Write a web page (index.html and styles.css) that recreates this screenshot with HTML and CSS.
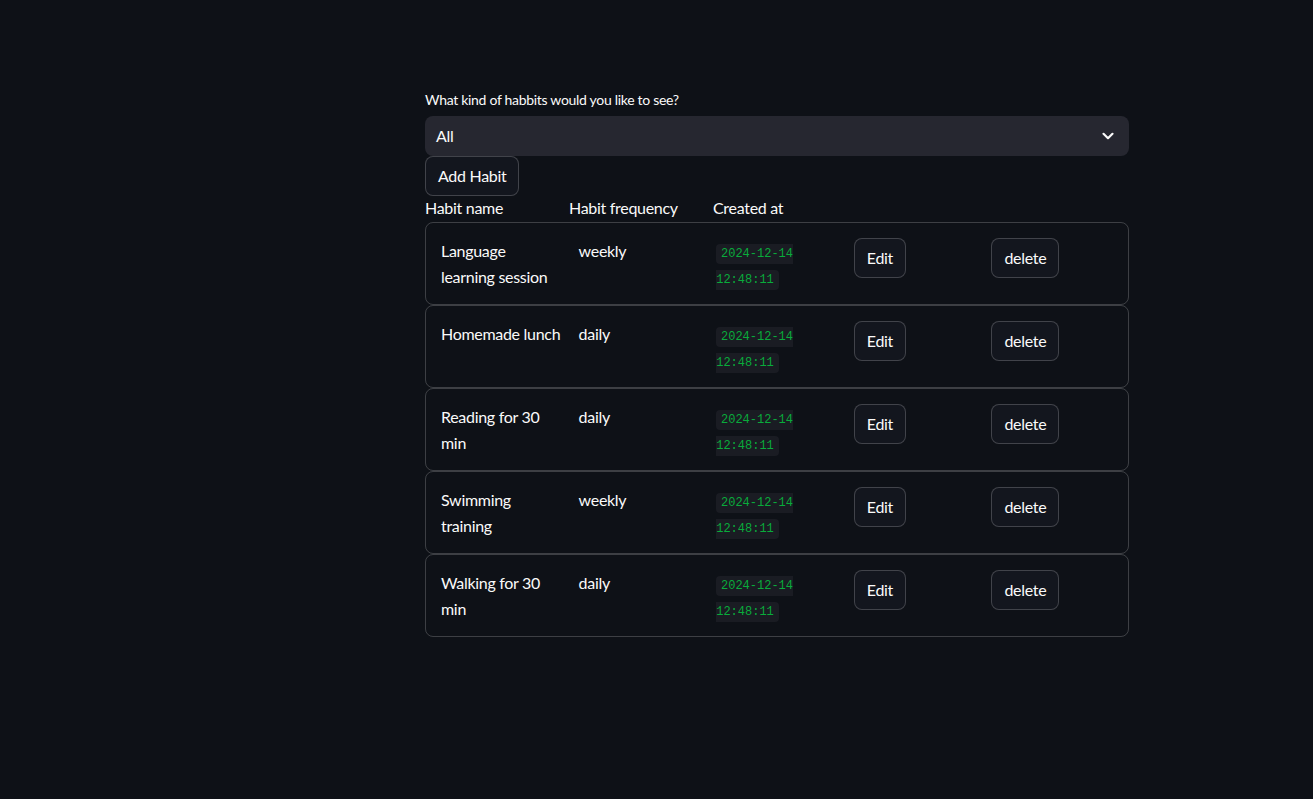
FILE: index.html
```html
<!DOCTYPE html>
<html lang="en">
<head>
<meta charset="utf-8">
<title>Habits</title>
<link rel="stylesheet" href="styles.css">
</head>
<body>
<main class="app">
  <div class="block">
    <label class="label">What kind of habbits would you like to see?</label>
    <div class="select">
      <span>All</span>
      <svg class="chev" width="14" height="14" viewBox="0 0 14 14"><path d="M2.5 4.8 L7 9.2 L11.5 4.8" fill="none" stroke="#fafafa" stroke-width="2.2" stroke-linecap="round" stroke-linejoin="round"/></svg>
    </div>
    <div class="btn-row"><button class="btn">Add Habit</button></div>
    <div class="cols head">
      <div>Habit name</div>
      <div>Habit frequency</div>
      <div>Created at</div>
      <div></div>
      <div></div>
    </div>
    <div class="card">
      <div class="cols">
        <div>Language learning session</div>
        <div>weekly</div>
        <div><code>2024-12-14 12:48:11</code></div>
        <div><button class="btn">Edit</button></div>
        <div><button class="btn">delete</button></div>
      </div>
    </div>
    <div class="card">
      <div class="cols">
        <div>Homemade lunch</div>
        <div>daily</div>
        <div><code>2024-12-14 12:48:11</code></div>
        <div><button class="btn">Edit</button></div>
        <div><button class="btn">delete</button></div>
      </div>
    </div>
    <div class="card">
      <div class="cols">
        <div>Reading for 30 min</div>
        <div>daily</div>
        <div><code>2024-12-14 12:48:11</code></div>
        <div><button class="btn">Edit</button></div>
        <div><button class="btn">delete</button></div>
      </div>
    </div>
    <div class="card">
      <div class="cols">
        <div>Swimming training</div>
        <div>weekly</div>
        <div><code>2024-12-14 12:48:11</code></div>
        <div><button class="btn">Edit</button></div>
        <div><button class="btn">delete</button></div>
      </div>
    </div>
    <div class="card">
      <div class="cols">
        <div>Walking for 30 min</div>
        <div>daily</div>
        <div><code>2024-12-14 12:48:11</code></div>
        <div><button class="btn">Edit</button></div>
        <div><button class="btn">delete</button></div>
      </div>
    </div>
  </div>
</main>
</body>
</html>
```

FILE: styles.css
```css
html, body {
  margin: 0;
  padding: 0;
  background: #0e1117;
  color: #fafafa;
  font-family: "Lato", "Noto Sans", sans-serif;
  font-size: 16px;
  line-height: 1.6;
  letter-spacing: -0.3px;
  height: 100%;
}
.app {
  padding-top: 89px;
  padding-left: 425px;
}
.block {
  width: 704px;
  display: flex;
  flex-direction: column;
}
.label {
  display: block;
  font-size: 14px;
  line-height: 22.4px;
  margin-bottom: 4.6px;
}
.select {
  height: 40px;
  box-sizing: border-box;
  background: #262730;
  border-radius: 8px;
  display: flex;
  align-items: center;
  justify-content: space-between;
  padding: 0 14px 0 11px;
}
.chev { display: block; }
.btn-row { display: flex; }
.btn {
  font-family: inherit;
  font-size: 16px;
  line-height: 1.6;
  letter-spacing: -0.3px;
  color: #fafafa;
  background: #13161e;
  border: 1px solid rgba(250, 250, 250, 0.2);
  border-radius: 8px;
  padding: 0 12px;
  height: 40px;
  box-sizing: border-box;
  cursor: pointer;
}
.cols {
  display: grid;
  grid-template-columns: repeat(5, 1fr);
  column-gap: 16px;
}
.cols > div { min-width: 0; }
.head { height: 26px; line-height: 24px; }
.card {
  border: 1px solid rgba(250, 250, 250, 0.2);
  border-radius: 8px;
  padding: 15px;
  height: 83px;
  box-sizing: border-box;
}
.card .cols { line-height: 25.6px; }
code {
  font-family: "Liberation Mono", "DejaVu Sans Mono", monospace;
  font-size: 12px;
  letter-spacing: 0;
  color: #09ab3b;
  background: #1a1c23;
  padding: 3px 4.8px;
  border-radius: 4px;
  line-height: 12px;
}
```
